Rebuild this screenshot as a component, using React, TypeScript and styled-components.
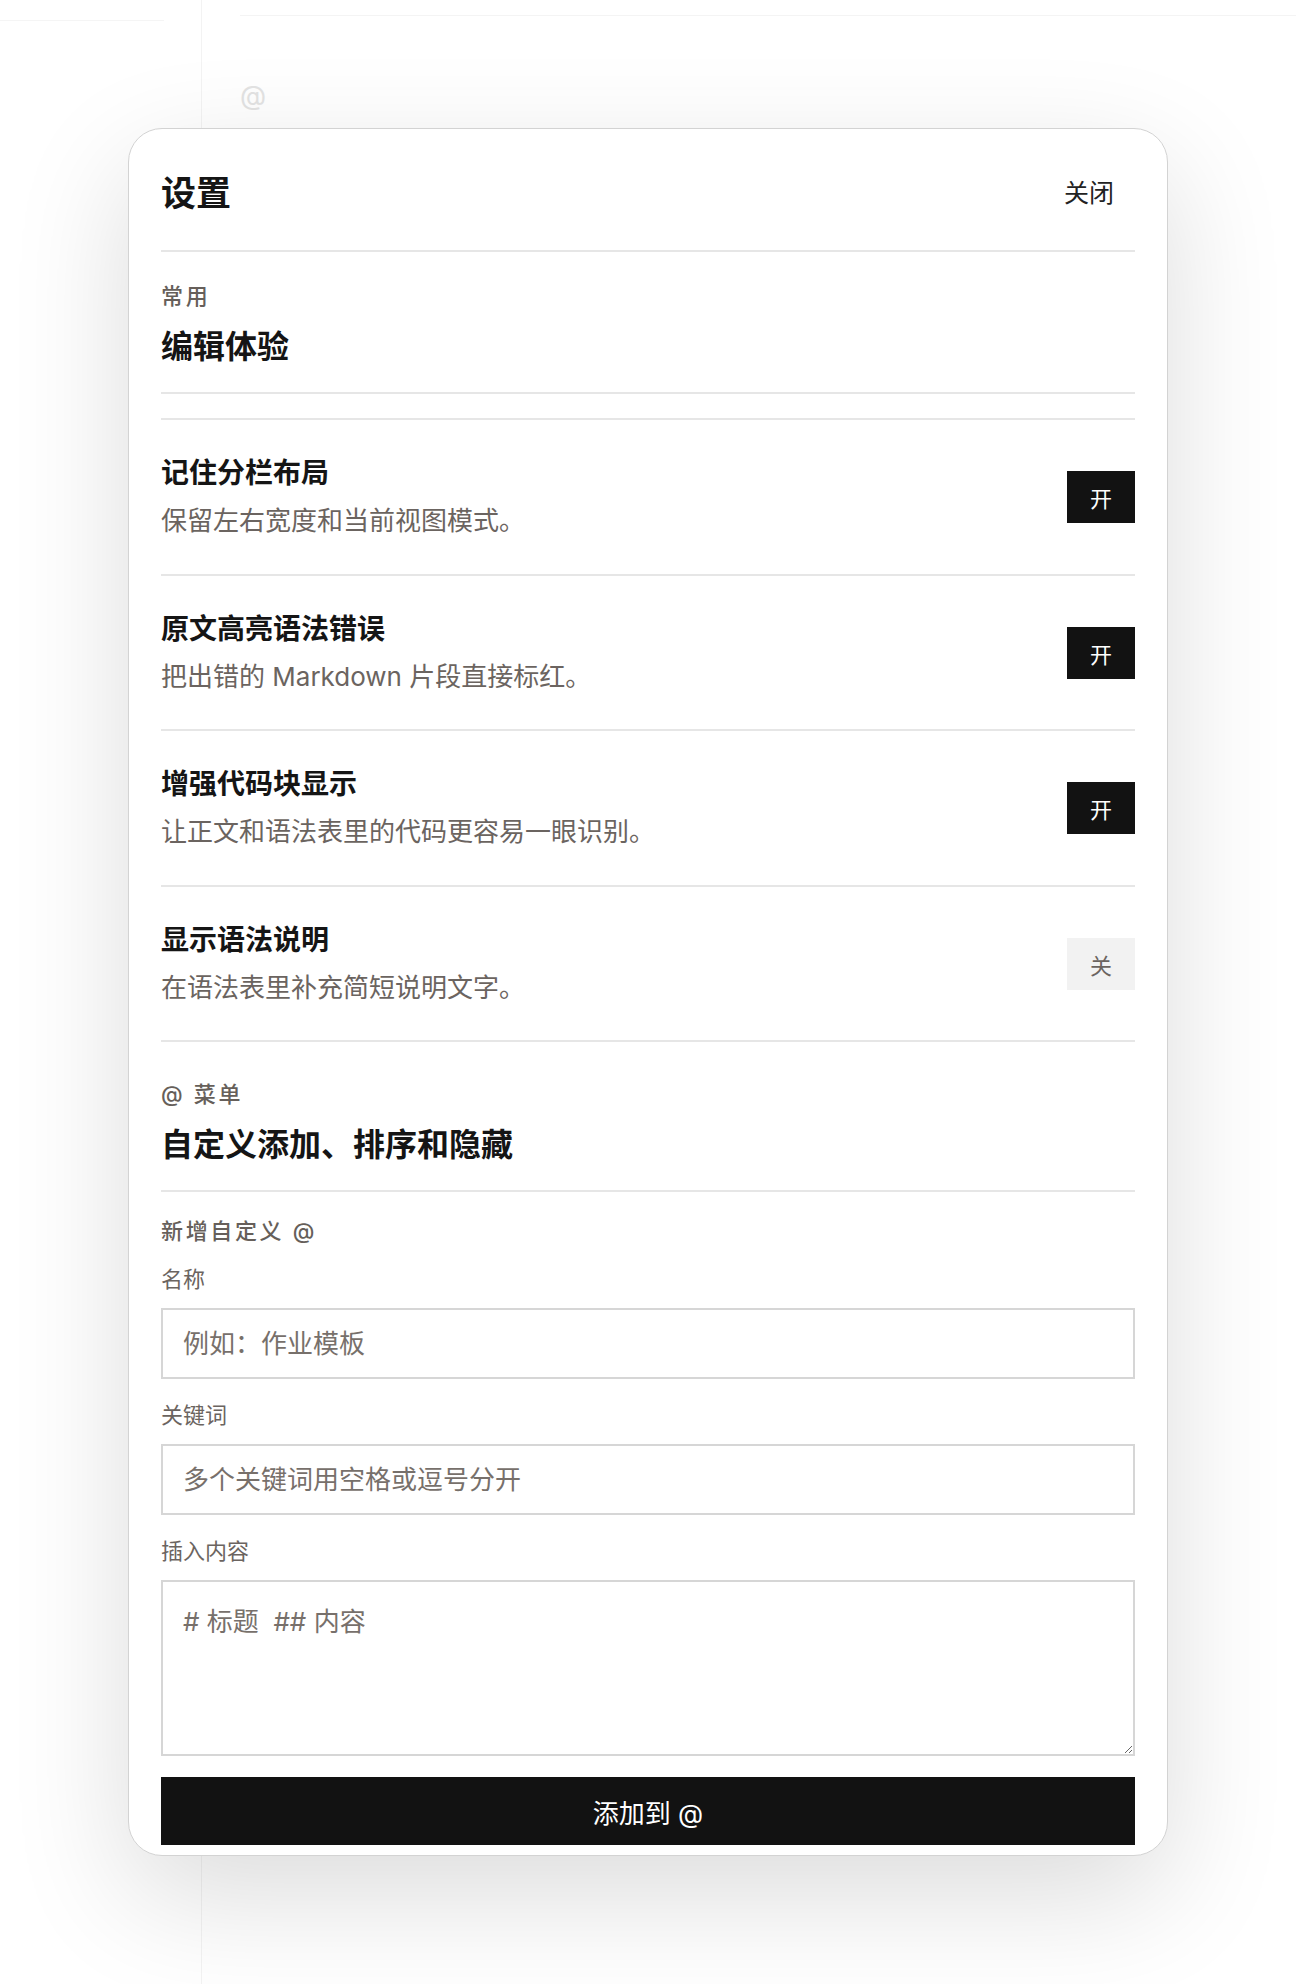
import React from 'react';
import styled, { createGlobalStyle } from 'styled-components';

const GlobalStyle = createGlobalStyle`
  html, body {
    margin: 0;
    padding: 0;
    background: #fff;
  }
  body {
    font-family: "Inter", "Noto Sans CJK SC", sans-serif;
    color: #141414;
  }
  * {
    box-sizing: border-box;
  }
`;

const Page = styled.div`
  position: relative;
  width: 1296px;
  height: 1984px;
  overflow: hidden;
  background: #fff;
`;

// faded app behind the dialog
const Shell = styled.div`
  display: grid;
  grid-template-columns: 202px 1fr;
  height: 100%;
`;

const Sidebar = styled.aside`
  border-right: 1px solid #f3f3f3;
`;

const SidebarHead = styled.div`
  height: 21px;
  margin-right: 37px;
  border-bottom: 1px solid #f5f5f5;
`;

const Main = styled.main`
  padding-left: 38px;
`;

const TopBar = styled.div`
  height: 16px;
  border-bottom: 1px solid #f4f4f4;
`;

const GhostAt = styled.div`
  margin-top: 66px;
  font-size: 27px;
  line-height: 1;
  color: #e3e3e3;
`;

const Overlay = styled.div`
  position: absolute;
  inset: 0;
  display: flex;
  justify-content: center;
  align-items: flex-start;
  padding-top: 128px;
`;

const Dialog = styled.section`
  width: 1040px;
  background: #fff;
  border: 1.5px solid #d3d3d3;
  border-radius: 34px;
  box-shadow: 0 40px 120px rgba(0, 0, 0, 0.14);
  padding: 0 32px 10px;
`;

const Header = styled.header`
  display: flex;
  align-items: center;
  justify-content: space-between;
  padding: 41px 0 34px;
  border-bottom: 2px solid #e6e6e6;
`;

const Title = styled.h1`
  margin: 0;
  font-size: 35px;
  line-height: 46px;
  font-weight: 700;
  color: #151515;
`;

const CloseButton = styled.button`
  font-family: inherit;
  font-size: 25px;
  line-height: 32px;
  color: #222;
  background: transparent;
  border: none;
  padding: 0 21px 0 0;
  cursor: pointer;
`;

const SectionHead = styled.div<{ $spaced?: boolean }>`
  padding: 29px 0 24px;
  margin-top: ${(p) => (p.$spaced ? '8px' : '0')};
  border-bottom: 2px solid #e6e6e6;
`;

const Eyebrow = styled.div`
  font-size: 22px;
  line-height: 30px;
  font-weight: 500;
  letter-spacing: 0.12em;
  color: #665f5a;
`;

const SectionTitle = styled.h2`
  margin: 15px 0 0;
  font-size: 32px;
  line-height: 42px;
  font-weight: 700;
  color: #151515;
`;

const List = styled.div`
  margin-top: 24px;
  border-top: 2px solid #e6e6e6;
`;

const Row = styled.div`
  display: flex;
  align-items: center;
  justify-content: space-between;
  padding: 34px 0 33.5px;
  border-bottom: 2px solid #e6e6e6;
`;

const RowText = styled.div`
  display: flex;
  flex-direction: column;
  gap: 9px;
`;

const RowTitle = styled.div`
  font-size: 28px;
  line-height: 38px;
  font-weight: 700;
  color: #151515;
`;

const RowDesc = styled.div`
  font-size: 26px;
  line-height: 39px;
  color: #6b6460;
`;

const Toggle = styled.button<{ $on: boolean }>`
  width: 68px;
  height: 52px;
  border: none;
  padding: 0;
  font-family: inherit;
  font-size: 22px;
  background: ${(p) => (p.$on ? '#121212' : '#f2f2f2')};
  color: ${(p) => (p.$on ? '#fff' : '#6b6460')};
  cursor: pointer;
`;

const Form = styled.form`
  display: flex;
  flex-direction: column;
  padding-top: 24px;
`;

const FormHeading = styled(Eyebrow)`
  margin-bottom: 18px;
`;

const Field = styled.label`
  display: flex;
  flex-direction: column;
  gap: 14px;
  & + & {
    margin-top: 21px;
  }
`;

const FieldLabel = styled.span`
  font-size: 22px;
  line-height: 30px;
  color: #6b6460;
`;

const TextInput = styled.input`
  height: 71px;
  border: 2px solid #d6d6d6;
  border-radius: 0;
  padding: 0 20px;
  font-family: inherit;
  font-size: 26px;
  color: #151515;
  background: #fff;
  outline: none;
  &::placeholder {
    color: #77706b;
  }
`;

const TextArea = styled.textarea`
  display: block;
  height: 176px;
  border: 2px solid #d6d6d6;
  border-radius: 0;
  padding: 20px;
  font-family: inherit;
  font-size: 26px;
  line-height: 1.5;
  color: #151515;
  background: #fff;
  resize: vertical;
  outline: none;
  &::placeholder {
    color: #77706b;
  }
`;

const SubmitButton = styled.button`
  margin-top: 21px;
  height: 68px;
  border: none;
  background: #121212;
  color: #fff;
  font-family: inherit;
  font-size: 26px;
  cursor: pointer;
`;

const settings = [
  { title: '记住分栏布局', desc: '保留左右宽度和当前视图模式。', on: true },
  { title: '原文高亮语法错误', desc: '把出错的 Markdown 片段直接标红。', on: true },
  { title: '增强代码块显示', desc: '让正文和语法表里的代码更容易一眼识别。', on: true },
  { title: '显示语法说明', desc: '在语法表里补充简短说明文字。', on: false },
];

export default function App() {
  return (
    <Page>
      <GlobalStyle />
      <Shell>
        <Sidebar>
          <SidebarHead />
        </Sidebar>
        <Main>
          <TopBar />
          <GhostAt>@</GhostAt>
        </Main>
      </Shell>
      <Overlay>
        <Dialog>
          <Header>
            <Title>设置</Title>
            <CloseButton type="button">关闭</CloseButton>
          </Header>

          <SectionHead>
            <Eyebrow>常用</Eyebrow>
            <SectionTitle>编辑体验</SectionTitle>
          </SectionHead>

          <List>
            {settings.map((s) => (
              <Row key={s.title}>
                <RowText>
                  <RowTitle>{s.title}</RowTitle>
                  <RowDesc>{s.desc}</RowDesc>
                </RowText>
                <Toggle type="button" $on={s.on}>
                  {s.on ? '开' : '关'}
                </Toggle>
              </Row>
            ))}
          </List>

          <SectionHead $spaced>
            <Eyebrow>@ 菜单</Eyebrow>
            <SectionTitle>自定义添加、排序和隐藏</SectionTitle>
          </SectionHead>

          <Form onSubmit={(e) => e.preventDefault()}>
            <FormHeading>新增自定义 @</FormHeading>
            <Field>
              <FieldLabel>名称</FieldLabel>
              <TextInput placeholder="例如：作业模板" />
            </Field>
            <Field>
              <FieldLabel>关键词</FieldLabel>
              <TextInput placeholder="多个关键词用空格或逗号分开" />
            </Field>
            <Field>
              <FieldLabel>插入内容</FieldLabel>
              <TextArea placeholder="# 标题  ## 内容" />
            </Field>
            <SubmitButton type="submit">添加到 @</SubmitButton>
          </Form>
        </Dialog>
      </Overlay>
    </Page>
  );
}
